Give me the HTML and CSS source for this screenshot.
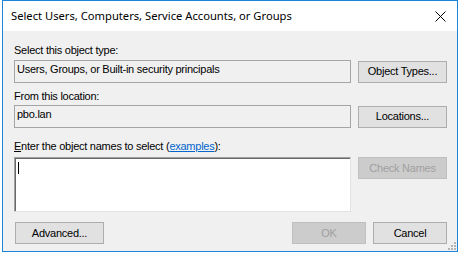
FILE: index.html
```html
<!DOCTYPE html>
<html lang="en">
<head>
  <title>Select Users, Computers, Service Accounts, or Groups</title>
  <meta charset="UTF-8">
  <link rel="stylesheet" href="styles.css">
</head>
<body>
  <div class="window">
    <div class="titlebar">
      <span class="title">Select Users, Computers, Service Accounts, or Groups</span>
      <svg class="close" width="11" height="11" viewBox="0 0 11 11">
        <path d="M0.5 0.5 L10.5 10.5 M10.5 0.5 L0.5 10.5" stroke="#000" stroke-width="1" fill="none"/>
      </svg>
    </div>

    <div class="content">
      <div class="label label-first">Select this object type:</div>
      <div class="row">
        <div class="field">Users, Groups, or Built-in security principals</div>
        <button class="btn">Object Types...</button>
      </div>

      <div class="label label-second">From this location:</div>
      <div class="row">
        <div class="field">pbo.lan</div>
        <button class="btn">Locations...</button>
      </div>

      <div class="label label-third"><u>E</u>nter the object names to select (<a href="#" class="link">examples</a>):</div>
      <div class="row row-top">
        <div class="names"><span class="caret"></span></div>
        <button class="btn" disabled>Check Names</button>
      </div>

      <div class="actions">
        <button class="btn">Advanced...</button>
        <span class="spacer"></span>
        <button class="btn btn-small" disabled>OK</button>
        <button class="btn btn-small">Cancel</button>
      </div>
    </div>

    <svg class="grip" width="8" height="8" viewBox="0 0 8 8">
      <rect x="6" y="0" width="2" height="2" fill="#b4b4b4"/>
      <rect x="3" y="3" width="2" height="2" fill="#b4b4b4"/>
      <rect x="6" y="3" width="2" height="2" fill="#b4b4b4"/>
      <rect x="0" y="6" width="2" height="2" fill="#b4b4b4"/>
      <rect x="3" y="6" width="2" height="2" fill="#b4b4b4"/>
      <rect x="6" y="6" width="2" height="2" fill="#b4b4b4"/>
    </svg>
  </div>
</body>
</html>
```

FILE: styles.css
```css
:root {
  --accent: #1a85d9;
  --face: #f0f0f0;
  --btn-bg: #e1e1e1;
  --btn-border: #adadad;
  --disabled-bg: #cccccc;
  --disabled-border: #bfbfbf;
  --disabled-text: #a0a0a0;
  --link: #0066cc;
}
html, body {
  margin: 0;
  padding: 0;
  background: #ffffff;
}
body {
  padding-left: 2px;
  font-family: 'Liberation Sans', Arial, sans-serif;
  font-size: 11px;
  line-height: 13px;
  letter-spacing: -0.25px;
  color: #000;
}
.window {
  position: relative;
  width: 454px;
  border: 1px solid var(--accent);
  background: var(--face);
}
.titlebar {
  height: 30px;
  background: #ffffff;
  display: flex;
  align-items: center;
  justify-content: space-between;
  padding: 0 8px 0 8px;
}
.title {
  font-family: 'Noto Sans', 'Open Sans', sans-serif;
  font-size: 11.2px;
  line-height: 16px;
  letter-spacing: 0;
  color: #000;
}
.close {
  display: block;
  margin-right: 3px;
}
.content {
  padding: 13px 10px 7px 11px;
}
.label {
  height: 13px;
}
.label-first {
  margin-bottom: 3px;
}
.label-second {
  margin-top: 7px;
  margin-bottom: 2px;
}
.label-third {
  margin-top: 12px;
  margin-bottom: 4px;
}
.link {
  color: var(--link);
  text-decoration: underline;
}
.row {
  display: flex;
  align-items: center;
  gap: 7px;
}
.row-top {
  align-items: flex-start;
}
.field {
  box-sizing: border-box;
  flex: 1;
  height: 23px;
  padding: 2px 2px 0;
  border: 1px solid #a5a5a5;
  background: var(--face);
  white-space: nowrap;
}
.names {
  box-sizing: border-box;
  flex: 1;
  height: 55px;
  padding: 2px 2px;
  background: #ffffff;
  border-style: solid;
  border-width: 1px;
  border-color: #a0a0a0 #e3e3e3 #e3e3e3 #a0a0a0;
  box-shadow: inset 1px 1px 0 #696969;
}
.caret {
  display: block;
  width: 1px;
  height: 12px;
  margin: 2px 0 0 1px;
  background: #000;
}
.btn {
  box-sizing: border-box;
  width: 89px;
  height: 22px;
  padding: 0;
  border: 1px solid var(--btn-border);
  background: var(--btn-bg);
  font-family: 'Liberation Sans', Arial, sans-serif;
  font-size: 11px;
  line-height: 13px;
  letter-spacing: -0.25px;
  color: #000;
}
.btn:disabled {
  border-color: var(--disabled-border);
  background: var(--disabled-bg);
  color: var(--disabled-text);
}
.btn-small {
  width: 74px;
}
.actions {
  display: flex;
  align-items: center;
  gap: 7px;
  margin-top: 10px;
}
.actions .btn:first-child {
  margin-left: 1px;
}
.spacer {
  flex: 1;
}
.grip {
  position: absolute;
  right: 1px;
  bottom: 1px;
}
```
